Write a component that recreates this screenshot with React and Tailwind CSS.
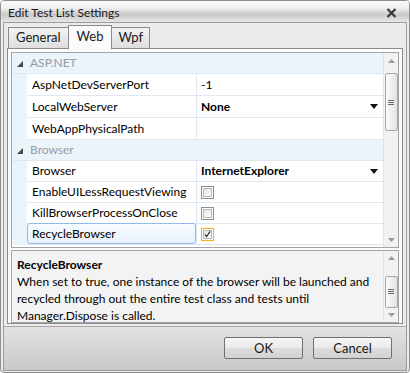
import React from 'react';

const groups = [
  {
    name: 'ASP.NET',
    rowH: 'h-[22px]',
    rows: [
      { label: 'AspNetDevServerPort', value: '-1' },
      { label: 'LocalWebServer', value: 'None', bold: true, drop: true },
      { label: 'WebAppPhysicalPath', value: '' },
    ],
  },
  {
    name: 'Browser',
    rowH: 'h-[21px]',
    rows: [
      { label: 'Browser', value: 'InternetExplorer', bold: true, drop: true },
      { label: 'EnableUILessRequestViewing', check: 'off' },
      { label: 'KillBrowserProcessOnClose', check: 'off' },
      { label: 'RecycleBrowser', check: 'on', selected: true },
    ],
  },
];

const Arrow = ({ up }) => (
  <svg width="7" height="4" viewBox="0 0 7 4" className="block">
    <path d={up ? 'M0 4 L3.5 0 L7 4 Z' : 'M0 0 L7 0 L3.5 4 Z'} fill="#9a9a9a" />
  </svg>
);

const Scrollbar = ({ thumbTop, thumbH }) => (
  <div className="w-[15px] h-full bg-[#f2f2f2] border-l border-[#e4e4e4] flex flex-col items-center">
    <div className="h-[15px] flex items-center justify-center">
      <Arrow up />
    </div>
    <div className="flex-1 w-full flex flex-col items-center">
      <div style={{ marginTop: thumbTop, height: thumbH }} className="w-[13px] rounded-[2px] border border-[#a7a7a7] bg-gradient-to-r from-[#fbfbfb] to-[#e2e2e2] flex flex-col items-center justify-center gap-[1px]">
        <div className="w-[6px] h-px bg-[#6a6a6a]" />
        <div className="w-[6px] h-px bg-[#6a6a6a]" />
        <div className="w-[6px] h-px bg-[#6a6a6a]" />
      </div>
    </div>
    <div className="h-[15px] flex items-center justify-center">
      <Arrow />
    </div>
  </div>
);

const Checkbox = ({ on }) => (
  <div className={`w-[13px] h-[13px] border ${on ? 'border-[#f0b020]' : 'border-[#8e8e8e]'} p-px bg-white`}>
    <div className="w-full h-full border border-[#b8b8b8] bg-gradient-to-br from-[#e8e8e8] to-[#fafafa] flex items-center justify-center">
      {on && (
        <svg width="8" height="8" viewBox="0 0 8 8">
          <path d="M1 4.5 L3 7 L7 1" stroke="#222" strokeWidth="1.3" fill="none" />
        </svg>
      )}
    </div>
  </div>
);

const DropArrow = () => (
  <svg width="8" height="5" viewBox="0 0 8 5">
    <path d="M0 0 L8 0 L4 5 Z" fill="#111" />
  </svg>
);

export default function App() {
  return (
    <div className="w-[410px] h-[373px] bg-white font-['Lato',sans-serif] text-[12px] text-black">
      <div className="w-full h-full border border-[#8f8f8f] rounded-[4px] bg-[#ececec] flex flex-col overflow-hidden">
        {/* title bar */}
        <div className="h-[21px] flex items-center justify-between pl-[7px] pr-[12px] bg-[linear-gradient(to_bottom,#fafafa_0%,#f2f2f2_30%,#c9c9c9_65%,#e6e6e6_100%)]">
          <span className="text-[12px] text-[#1a1a1a] leading-none mt-[3px]">Edit Test List Settings</span>
          <svg width="11" height="10" viewBox="0 0 11 10" className="mt-[3px]">
            <path d="M1.5 1 L9.5 9 M9.5 1 L1.5 9" stroke="#3a3a3a" strokeWidth="2.2" />
          </svg>
        </div>

        {/* frame */}
        <div className="flex-1 mx-[2px] mb-[1px] border border-[#9c9c9c] bg-[#ebebeb] flex flex-col">
          {/* tabs */}
          <div className="flex items-end pl-[4px] h-[25px]">
            <div className="h-[21px] px-[7px] flex items-center border border-[#8a8a8a] border-b-0 bg-gradient-to-b from-[#f3f3f3] to-[#dedede] text-[13px] text-[#1a1a1a]">General</div>
            <div className="h-[24px] px-[8px] flex items-center border border-[#8a8a8a] border-b-0 -ml-px bg-[#fbfbfb] text-[13px] text-[#1a1a1a] relative z-10 -mb-px pb-[2px]">Web</div>
            <div className="h-[21px] px-[6px] flex items-center border border-[#8a8a8a] border-b-0 -ml-px bg-gradient-to-b from-[#f3f3f3] to-[#dedede] text-[13px] text-[#1a1a1a]">Wpf</div>
          </div>

          {/* tab panel */}
          <div className="mx-[3px] h-[276px] border border-[#8a8a8a] bg-[#fbfbfb] px-[3px] pt-[3px] flex flex-col">
            {/* property grid */}
            <div className="h-[197px] border border-[#a4a4a4] bg-white flex">
              <div className="flex-1 flex flex-col">
                {groups.map((g) => (
                  <div key={g.name}>
                    <div className="h-[21px] bg-[#ebf3fb] flex items-center border-b border-[#dde8f3]">
                      <svg width="6" height="6" viewBox="0 0 6 6" className="ml-[5px] mt-[1px]">
                        <path d="M6 0 L6 6 L0 6 Z" fill="#4a4a4a" />
                      </svg>
                      <span className="ml-[7px] text-[#949ca6]">{g.name}</span>
                    </div>
                    {g.rows.map((r) => (
                      <div key={r.label} className={`${g.rowH} flex bg-[#ebf3fb]`}>
                        <div className="w-[15px]" />
                        <div className="w-[169px] bg-white border-b border-[#dde8f3] flex">
                          {r.selected ? (
                            <div className="flex-1 -mt-px rounded-[3px] border border-[#8ebbeb] bg-gradient-to-b from-[#f6fbff] to-[#e8f2fd] flex items-center pl-[4px]">
                              {r.label}
                            </div>
                          ) : (
                            <div className="flex-1 flex items-center pl-[5px]">{r.label}</div>
                          )}
                        </div>
                        <div className="w-px bg-[#dde8f3]" />
                        <div className="flex-1 bg-white border-b border-[#dde8f3] flex items-center pl-[4px] pr-[5px]">
                          {r.check ? (
                            <Checkbox on={r.check === 'on'} />
                          ) : (
                            <>
                              <span className={`flex-1 ${r.bold ? 'font-bold' : ''}`}>{r.value}</span>
                              {r.drop && <DropArrow />}
                            </>
                          )}
                        </div>
                      </div>
                    ))}
                  </div>
                ))}
              </div>
              <Scrollbar thumbTop={5} thumbH={58} />
            </div>

            {/* description */}
            <div className="mt-[2px] h-[73px] border border-[#a4a4a4] bg-[#f3f3f3] flex overflow-hidden">
              <div className="flex-1 pl-[5px] pt-[5px] leading-[17px]">
                <div className="font-bold">RecycleBrowser</div>
                <div>When set to true, one instance of the browser will be launched and recycled through out the entire test class and tests until Manager.Dispose is called.</div>
              </div>
              <Scrollbar thumbTop={10} thumbH={32} />
            </div>
          </div>

          {/* buttons */}
          <div className="mt-[2px] flex-1 border-t border-[#a8a8a8] bg-gradient-to-b from-[#e2e2e2] to-[#c9c9c9] flex justify-end items-start pt-[10px] pr-[14px] gap-[10px]">
            <button className="w-[79px] h-[22px] border border-[#707070] rounded-[2px] bg-[linear-gradient(to_bottom,#f6f6f6_0%,#eaeaea_48%,#dcdcdc_52%,#d2d2d2_100%)] text-[13px] text-[#1a1a1a] leading-none">OK</button>
            <button className="w-[79px] h-[22px] border border-[#707070] rounded-[2px] bg-[linear-gradient(to_bottom,#f6f6f6_0%,#eaeaea_48%,#dcdcdc_52%,#d2d2d2_100%)] text-[13px] text-[#1a1a1a] leading-none">Cancel</button>
          </div>
        </div>
      </div>
    </div>
  );
}
